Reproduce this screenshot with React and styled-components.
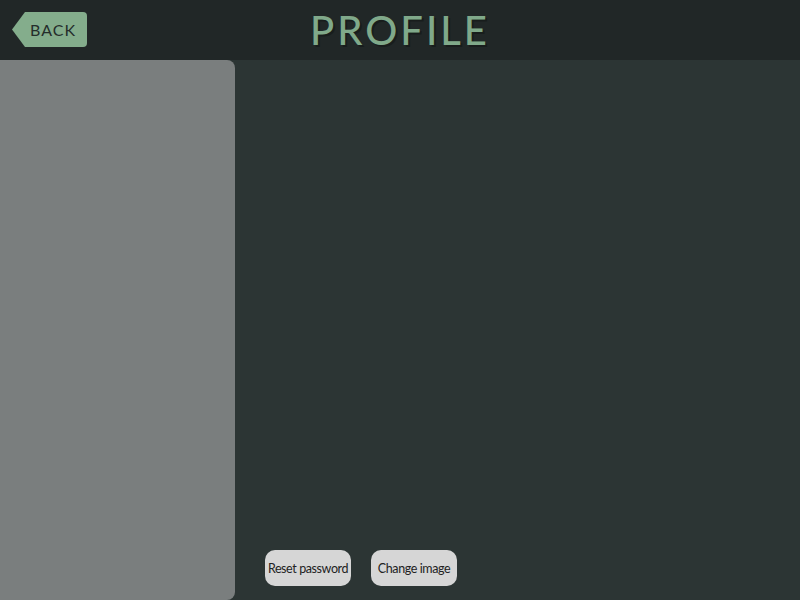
import React from 'react';
import styled, { createGlobalStyle } from 'styled-components';

const GlobalStyle = createGlobalStyle`
  html, body { margin: 0; padding: 0; height: 100%; }
  body {
    background: #2c3534;
    font-family: 'Lato', 'Liberation Sans', sans-serif;
    overflow: hidden;
  }
`;

const Page = styled.div`
  display: flex;
  flex-direction: column;
  width: 800px;
  height: 600px;
`;

const Header = styled.header`
  position: relative;
  display: flex;
  align-items: center;
  justify-content: center;
  height: 60px;
  background: #212727;
  flex-shrink: 0;
`;

const BackButton = styled.button`
  position: absolute;
  left: 12px;
  top: 12px;
  width: 75px;
  height: 35px;
  border: none;
  padding: 0 0 0 7px;
  background: #84ad8c;
  color: #252d2b;
  font-family: 'Lato', 'Liberation Sans', sans-serif;
  font-size: 16px;
  letter-spacing: 1px;
  cursor: pointer;
  clip-path: polygon(13px 0, 100% 0, 100% 100%, 13px 100%, 0 50%);
  border-radius: 0 4px 4px 0;
`;

const Title = styled.h1`
  margin: 0;
  color: #80a98a;
  font-family: 'Lato', 'Liberation Sans', sans-serif;
  font-weight: 500;
  font-size: 40px;
  letter-spacing: 3px;
  text-shadow: 2px 2px 0 #181d1c;
`;

const Body = styled.div`
  display: flex;
  flex: 1;
  min-height: 0;
`;

const Sidebar = styled.aside`
  width: 235px;
  background: #7a7e7e;
  border-radius: 0 8px 8px 0;
  flex-shrink: 0;
`;

const Main = styled.main`
  flex: 1;
  display: flex;
  align-items: flex-end;
  gap: 20px;
  padding: 0 0 14px 30px;
`;

const ActionButton = styled.button`
  height: 36px;
  width: 86px;
  padding: 0;
  border: none;
  border-radius: 10px;
  background: #d6d6d6;
  color: #222;
  font-family: 'Lato', 'Liberation Sans', sans-serif;
  font-size: 12.5px;
  letter-spacing: -0.4px;
  cursor: pointer;
`;

export default function App() {
  return (
    <Page>
      <GlobalStyle />
      <Header>
        <BackButton>BACK</BackButton>
        <Title>PROFILE</Title>
      </Header>
      <Body>
        <Sidebar />
        <Main>
          <ActionButton>Reset password</ActionButton>
          <ActionButton>Change image</ActionButton>
        </Main>
      </Body>
    </Page>
  );
}
